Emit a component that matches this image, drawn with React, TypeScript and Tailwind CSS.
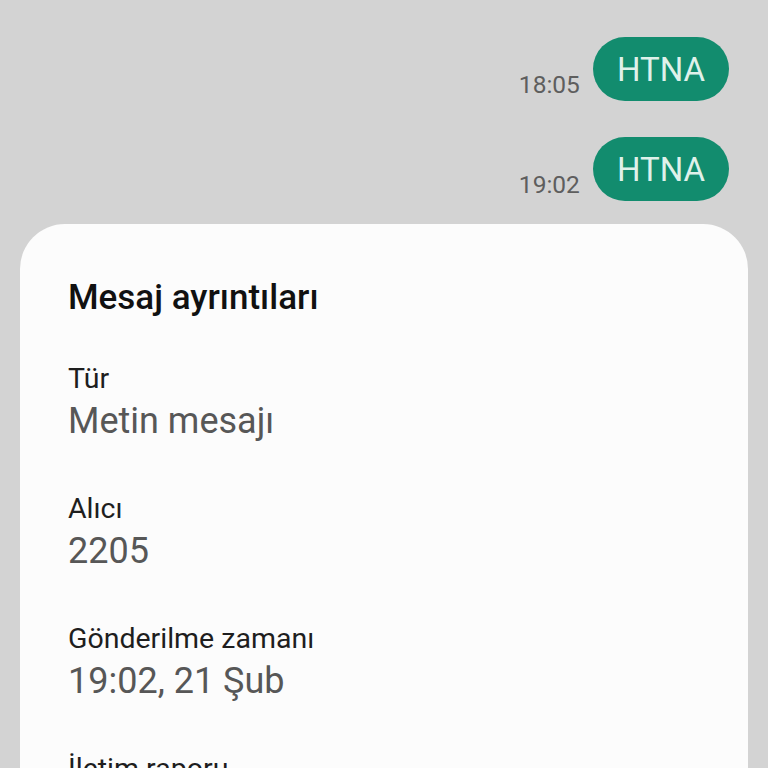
import React from "react";

const messages = [
  { time: "18:05", text: "HTNA" },
  { time: "19:02", text: "HTNA" },
];

const details = [
  { label: "Tür", value: "Metin mesajı" },
  { label: "Alıcı", value: "2205" },
  { label: "Gönderilme zamanı", value: "19:02, 21 Şub" },
  { label: "İletim raporu", value: "Alındı" },
];

export default function App() {
  return (
    <div
      className="w-[768px] h-[768px] overflow-hidden bg-[#d3d3d3] flex flex-col"
      style={{ fontFamily: "Roboto, 'Noto Sans', sans-serif" }}
    >
      {/* sohbet balonları */}
      <div className="flex flex-col items-end gap-[36px] pt-[37px] pr-[39px]">
        {messages.map((m, i) => (
          <div key={i} className="flex items-end gap-[13px]">
            <span className="text-[24.5px] leading-[30px] text-[#5e5e5e] mb-[1px]">{m.time}</span>
            <div className="h-[64px] px-[24px] rounded-full bg-[#128c6e] flex items-center">
              <span className="text-[33px] leading-none text-[#dff1ea]">{m.text}</span>
            </div>
          </div>
        ))}
      </div>

      {/* ayrıntı kartı */}
      <div className="mt-[23px] mx-[20px] flex-1 bg-[#fcfcfc] rounded-t-[45px] pt-[52px] px-[48px]">
        <h2 className="text-[35px] leading-[44px] font-medium text-[#111]">Mesaj ayrıntıları</h2>
        <div className="mt-[40px] flex flex-col gap-[46px]">
          {details.map((d) => (
            <div key={d.label} className="flex flex-col">
              <span className="text-[28.5px] leading-[38px] text-[#1e1e1e]">{d.label}</span>
              <span className="text-[36px] leading-[46px] text-[#575757]">{d.value}</span>
            </div>
          ))}
        </div>
      </div>
    </div>
  );
}
